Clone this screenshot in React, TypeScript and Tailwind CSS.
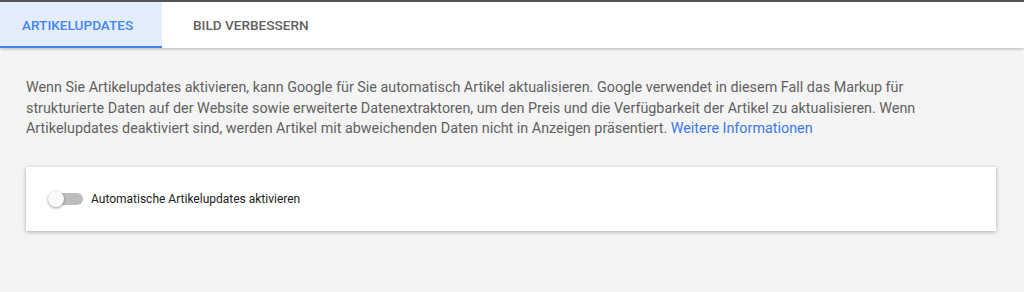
import { useState } from "react";

const tabs = ["ARTIKELUPDATES", "BILD VERBESSERN"];

const App = () => {
  const [active, setActive] = useState(0);
  const [enabled, setEnabled] = useState(false);

  return (
    <div className="h-[292px] w-[1024px] overflow-hidden bg-[#f4f4f4] font-['Roboto',sans-serif]">
      <nav className="flex h-[48px] border-t-2 border-[#545454] bg-white shadow-[0_1px_3px_rgba(0,0,0,0.25)]">
        {tabs.map((tab, i) => (
          <button
            key={tab}
            onClick={() => setActive(i)}
            className={
              i === active
                ? "w-[162px] border-b-2 border-[#4285f4] bg-[#e3edfc] pt-[2px] pl-[22px] text-left text-[13.6px] font-medium text-[#4285f4]"
                : "w-[176px] border-b-2 border-transparent pt-[2px] pl-[31px] text-left text-[13.6px] font-medium text-[#616161]"
            }
          >
            {tab}
          </button>
        ))}
      </nav>

      <main className="px-[26px] pt-[30px]">
        <p className="max-w-[945px] text-[14.35px] leading-[20.5px] text-[#616161]">
          Wenn Sie Artikelupdates aktivieren, kann Google für Sie automatisch Artikel aktualisieren. Google verwendet in diesem Fall das Markup für strukturierte Daten auf der Website sowie erweiterte Datenextraktoren, um den Preis und die Verfügbarkeit der Artikel zu aktualisieren. Wenn Artikelupdates deaktiviert sind, werden Artikel mit abweichenden Daten nicht in Anzeigen präsentiert.{" "}
          <a href="#" className="text-[#3b78e7]">
            Weitere Informationen
          </a>
        </p>

        <section className="mt-[27px] mr-[2px] flex h-[64px] items-center bg-white px-[22px] shadow-[0_1px_4px_rgba(0,0,0,0.3)]">
          <button
            onClick={() => setEnabled(!enabled)}
            className="relative mr-[8px] h-[12px] w-[35px] rounded-full bg-[#bdbdbd]"
          >
            <span
              className={
                enabled
                  ? "absolute top-[-2px] left-[19px] h-[16px] w-[16px] rounded-full bg-[#4285f4] shadow-[0_1px_3px_rgba(0,0,0,0.4)]"
                  : "absolute top-[-2px] left-0 h-[16px] w-[16px] rounded-full bg-[#fafafa] shadow-[0_1px_3px_rgba(0,0,0,0.4)]"
              }
            />
          </button>
          <span className="text-[12px] text-[#212121]">Automatische Artikelupdates aktivieren</span>
        </section>
      </main>
    </div>
  );
};

export default App;
